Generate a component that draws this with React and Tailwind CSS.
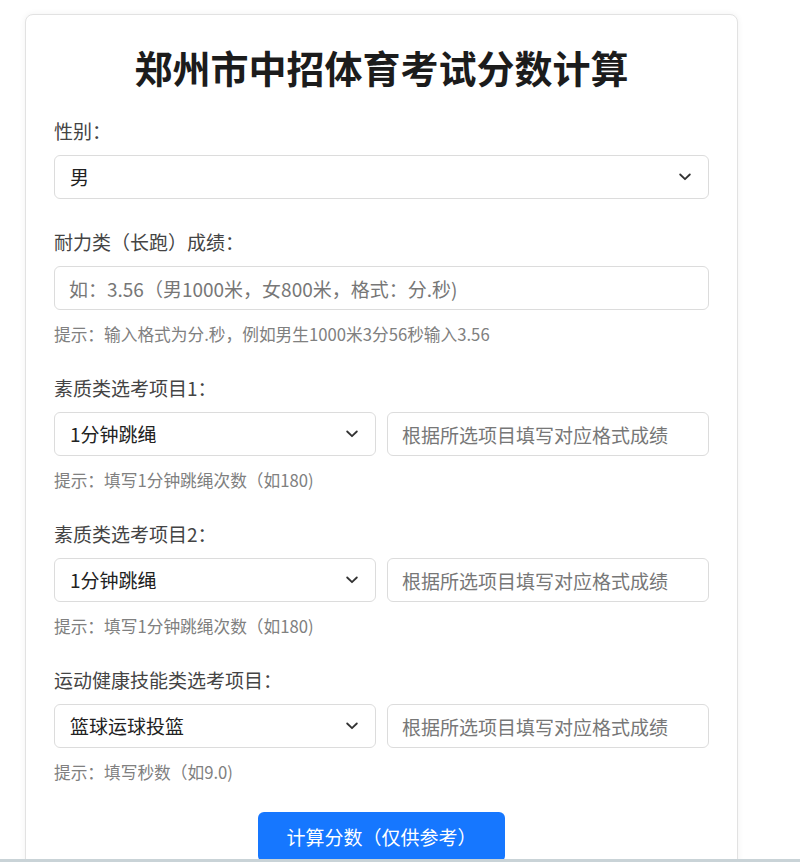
import { useState } from 'react';

const FONT = { fontFamily: '"Noto Sans CJK SC", "Microsoft YaHei", sans-serif' };

function Chevron() {
  return (
    <svg width="12" height="8" viewBox="0 0 12 8" className="pointer-events-none absolute right-[18px] top-1/2 -translate-y-1/2">
      <path d="M1.2 1.5 L6 6.2 L10.8 1.5" fill="none" stroke="#333" strokeWidth="1.8" strokeLinecap="round" strokeLinejoin="round" />
    </svg>
  );
}

function Select({ value, onChange, options }) {
  return (
    <div className="relative">
      <select
        value={value}
        onChange={e => onChange(e.target.value)}
        className="w-full h-[44px] appearance-none rounded-[6px] border border-[#dcdcdc] bg-white pl-[15px] pr-10 text-[19px] text-[#222] outline-none"
      >
        {options.map(o => (
          <option key={o} value={o}>{o}</option>
        ))}
      </select>
      <Chevron />
    </div>
  );
}

function Input({ placeholder, value, onChange }) {
  return (
    <input
      value={value}
      onChange={e => onChange(e.target.value)}
      placeholder={placeholder}
      className="w-full h-[44px] rounded-[6px] border border-[#dcdcdc] bg-white px-[14px] text-[19px] text-[#222] placeholder:text-[#777] outline-none"
    />
  );
}

function Label({ children }) {
  return <div className="text-[19px] leading-[24px] text-[#444] mb-[12px]">{children}</div>;
}

function Hint({ children }) {
  return <div className="text-[16.7px] leading-[22px] text-[#808080] mt-[13px]">{children}</div>;
}

const suzhi = ['1分钟跳绳', '立定跳远', '50米跑', '坐位体前屈', '引体向上'];
const jineng = ['篮球运球投篮', '足球运球射门', '排球垫球'];

export default function App() {
  const [sex, setSex] = useState('男');
  const [run, setRun] = useState('');
  const [x1, setX1] = useState('1分钟跳绳');
  const [s1, setS1] = useState('');
  const [x2, setX2] = useState('1分钟跳绳');
  const [s2, setS2] = useState('');
  const [x3, setX3] = useState('篮球运球投篮');
  const [s3, setS3] = useState('');

  return (
    <div className="min-h-screen bg-white" style={FONT}>
      <div className="ml-[25px] mt-[14px] w-[713px] rounded-[8px] border border-[#e2e2e2] bg-white px-[28px] pt-[29px] pb-[29px] shadow-[0_0_6px_rgba(0,0,0,0.06)]">
        <h1 className="text-center text-[38px] leading-[46px] font-bold text-[#1c1c1c] mb-[29px]">郑州市中招体育考试分数计算</h1>

        <div className="mb-[31px]">
          <Label>性别：</Label>
          <Select value={sex} onChange={setSex} options={['男', '女']} />
        </div>

        <div className="mb-[31px]">
          <Label>耐力类（长跑）成绩：</Label>
          <Input value={run} onChange={setRun} placeholder="如：3.56（男1000米，女800米，格式：分.秒)" />
          <Hint>提示：输入格式为分.秒，例如男生1000米3分56秒输入3.56</Hint>
        </div>

        <div className="mb-[31px]">
          <Label>素质类选考项目1：</Label>
          <div className="grid grid-cols-2 gap-[11px]">
            <Select value={x1} onChange={setX1} options={suzhi} />
            <Input value={s1} onChange={setS1} placeholder="根据所选项目填写对应格式成绩" />
          </div>
          <Hint>提示：填写1分钟跳绳次数（如180)</Hint>
        </div>

        <div className="mb-[31px]">
          <Label>素质类选考项目2：</Label>
          <div className="grid grid-cols-2 gap-[11px]">
            <Select value={x2} onChange={setX2} options={suzhi} />
            <Input value={s2} onChange={setS2} placeholder="根据所选项目填写对应格式成绩" />
          </div>
          <Hint>提示：填写1分钟跳绳次数（如180)</Hint>
        </div>

        <div className="mb-[29px]">
          <Label>运动健康技能类选考项目：</Label>
          <div className="grid grid-cols-2 gap-[11px]">
            <Select value={x3} onChange={setX3} options={jineng} />
            <Input value={s3} onChange={setS3} placeholder="根据所选项目填写对应格式成绩" />
          </div>
          <Hint>提示：填写秒数（如9.0)</Hint>
        </div>

        <div className="flex justify-center">
          <button className="h-[50px] rounded-[6px] bg-[#1677ff] px-[28px] text-[19px] text-white">
            计算分数（仅供参考）
          </button>
        </div>
      </div>
      <div className="fixed bottom-0 left-0 h-[3px] w-full bg-[#c9d3d7]" />
    </div>
  );
}
